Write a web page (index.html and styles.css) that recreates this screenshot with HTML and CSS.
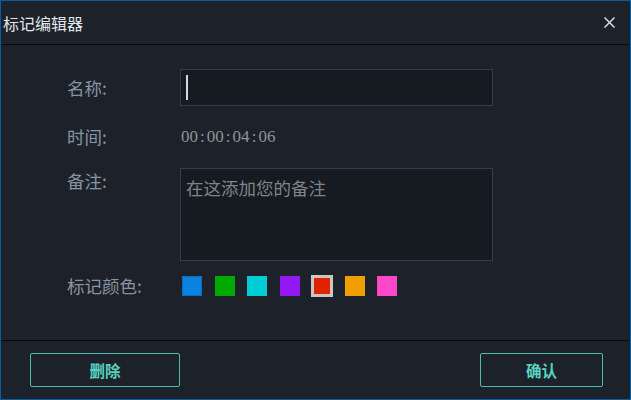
FILE: index.html
```html
<!DOCTYPE html>
<html lang="zh-CN">
<head>
<meta charset="utf-8">
<title>标记编辑器</title>
<link rel="stylesheet" href="styles.css">
</head>
<body>
<div class="window">
  <div class="header">
    <div class="title">标记编辑器</div>
    <button class="close" aria-label="关闭">
      <svg width="11" height="11" viewBox="0 0 11 11"><path d="M0.5 0.5 L10.5 10.5 M10.5 0.5 L0.5 10.5" stroke="#d9dde2" stroke-width="1.5" fill="none"/></svg>
    </button>
  </div>
  <div class="content">
    <div class="row row-name">
      <div class="label">名称:</div>
      <div class="field input"><span class="caret"></span></div>
    </div>
    <div class="row row-time">
      <div class="label">时间:</div>
      <div class="time">00<span class="sep">:</span>00<span class="sep">:</span>04<span class="sep">:</span>06</div>
    </div>
    <div class="row row-note">
      <div class="label">备注:</div>
      <div class="field textarea"><span class="placeholder">在这添加您的备注</span></div>
    </div>
    <div class="row row-color">
      <div class="label">标记颜色:</div>
      <div class="swatches">
        <span class="swatch c-blue"></span>
        <span class="swatch c-green"></span>
        <span class="swatch c-cyan"></span>
        <span class="swatch c-purple"></span>
        <span class="swatch c-red selected"></span>
        <span class="swatch c-orange"></span>
        <span class="swatch c-pink"></span>
      </div>
    </div>
  </div>
  <div class="footer">
    <button class="btn btn-delete">删除</button>
    <button class="btn btn-ok">确认</button>
  </div>
</div>
</body>
</html>
```

FILE: styles.css
```css
html, body {
  margin: 0;
  padding: 0;
  background: #1d222a;
}
body {
  width: 631px;
  height: 400px;
  font-family: "Noto Sans CJK SC", "Noto Sans", sans-serif;
}
.window {
  box-sizing: border-box;
  width: 631px;
  height: 400px;
  border: 1px solid #0b5c9f;
  background: #1d222a;
  display: flex;
  flex-direction: column;
}
.header {
  height: 43px;
  border-bottom: 1px solid #07090c;
  display: flex;
  align-items: center;
  justify-content: space-between;
  padding: 0 15px 0 2px;
}
.title {
  color: #e2e6ea;
  font-size: 16px;
  line-height: 20px;
}
.close {
  background: none;
  border: none;
  padding: 0;
  width: 11px;
  height: 11px;
  display: flex;
  margin-top: -1px;
}
.content {
  flex: 1;
  padding: 24px 0 0 66px;
  display: flex;
  flex-direction: column;
}
.row {
  display: flex;
  align-items: center;
}
.label {
  width: 113px;
  flex: none;
  color: #8894a0;
  font-size: 17.5px;
  line-height: 26px;
}
.field {
  box-sizing: border-box;
  width: 313px;
  background: #161a21;
  border: 1px solid #363d48;
}
.input {
  height: 37px;
  display: flex;
  align-items: center;
  padding-left: 5px;
}
.caret {
  width: 2px;
  height: 25px;
  background: #d4d8de;
}
.row-time {
  margin-top: 18px;
  height: 25px;
}
.time {
  color: #8c939b;
  font-family: "Liberation Serif", serif;
  font-size: 17px;
  line-height: 25px;
  padding-left: 1px;
}
.sep {
  display: inline-block;
  width: 8.8px;
  text-align: center;
}
.row-note {
  margin-top: 19px;
  align-items: flex-start;
}
.textarea {
  height: 93px;
  padding: 6px 5px;
}
.placeholder {
  color: #7f848b;
  font-size: 17.5px;
  line-height: 26px;
}
.row-color {
  margin-top: 14px;
  height: 22px;
}
.swatches {
  display: flex;
  align-items: center;
  gap: 12.5px;
  padding-left: 2px;
}
.swatch {
  width: 20px;
  height: 20px;
  box-sizing: border-box;
}
.swatch.selected {
  width: 22px;
  height: 22px;
  margin: 0 -1px;
  border: 3px solid #cbc6c2;
}
.c-blue { background: #0a84e2; border: 1px solid #1467b0; }
.c-green { background: #00aa00; }
.c-cyan { background: #00ced4; }
.c-purple { background: #9418f2; }
.c-red { background: #e02400; }
.c-orange { background: #f19e00; }
.c-pink { background: #ff47c9; }
.footer {
  height: 59px;
  border-top: 1px solid #07090c;
  display: flex;
  justify-content: space-between;
  align-items: flex-start;
  padding: 12px 27px 0 29px;
  box-sizing: border-box;
}
.btn {
  height: 34px;
  background: transparent;
  border: 1.5px solid #4cbdad;
  border-radius: 2px;
  color: #58d2c2;
  font-family: "Noto Sans CJK SC", sans-serif;
  font-weight: bold;
  font-size: 15.5px;
  padding: 0;
}
.btn-delete { width: 150px; }
.btn-ok { width: 123px; }
```
